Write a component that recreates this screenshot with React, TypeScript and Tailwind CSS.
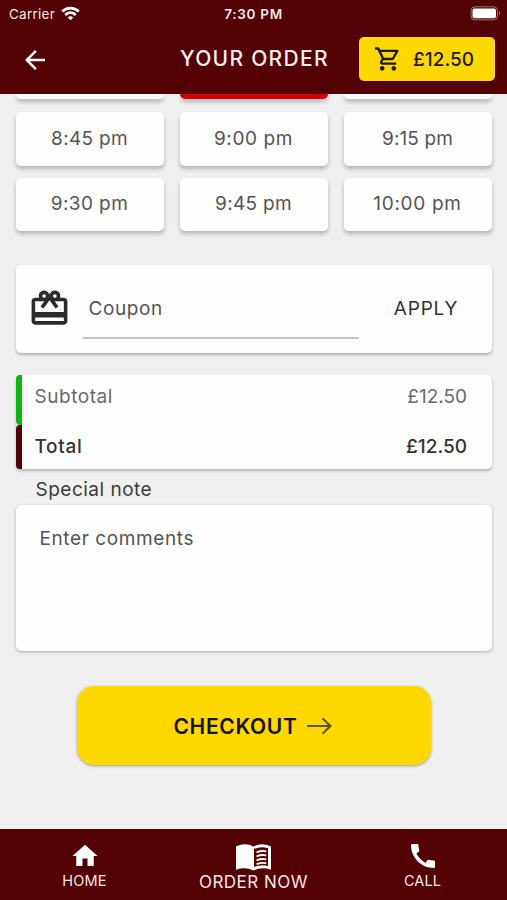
import {
  MdArrowBack,
  MdCall,
  MdHome,
  MdOutlineShoppingCart,
  MdRedeem,
} from "react-icons/md";

const slots = [
  { time: "8:45 pm", style: "tracking-[0.3px]" },
  { time: "9:00 pm", style: "tracking-[0.6px]" },
  { time: "9:15 pm", style: "tracking-[0.1px]" },
  { time: "9:30 pm", style: "tracking-[0.4px]" },
  { time: "9:45 pm", style: "tracking-[0.3px]" },
  { time: "10:00 pm", style: "tracking-[0.7px]" },
];

function StatusBar() {
  return (
    <div className="flex h-7 items-center justify-between pr-[6px] pl-[9px] text-[13.5px] text-[#f6e9e6]">
      <div className="flex w-24 items-center gap-[6px]">
        <span className="tracking-[0.25px]">Carrier</span>
        <svg className="mt-[-2px]" width="19" height="15" viewBox="0 0 19 15" fill="none" stroke="#fff" strokeWidth="2.8">
          <path d="M1.2 5.6a11.8 11.8 0 0 1 16.6 0" />
          <path d="M4.2 8.9a7.5 7.5 0 0 1 10.6 0" />
          <path d="M9.5 14.2l-2.7-2.7a3.8 3.8 0 0 1 5.4 0z" fill="#fff" stroke="none" />
        </svg>
      </div>
      <span className="mr-[3px] font-semibold tracking-[0.7px]">7:30 PM</span>
      <div className="flex w-24 justify-end">
        <svg className="mt-[-2px]" width="31" height="15" viewBox="0 0 31 15">
          <rect x="1" y="0.8" width="26.5" height="13" rx="4" fill="none" stroke="#fff" strokeOpacity="0.45" />
          <rect x="2.5" y="2.4" width="23.5" height="9.8" rx="2" fill="#fff" />
          <path d="M29 5.2q2 2 0 4.2z" fill="#fff" fillOpacity="0.5" />
        </svg>
      </div>
    </div>
  );
}

function Header() {
  return (
    <header className="h-[94px] shrink-0 bg-[#520003]">
      <StatusBar />
      <div className="grid h-[62px] grid-cols-[180px_148px_1fr] items-center pr-3">
        <button className="pt-px pl-[20px] text-white" aria-label="Back">
          <MdArrowBack size={30} />
        </button>
        <h1 className="text-[21px] font-medium tracking-[1.3px] whitespace-nowrap text-[#fbeeea]">
          YOUR ORDER
        </h1>
        <button className="ml-[31px] flex h-[44px] items-center rounded-[5px] bg-[#ffd800] pl-[15px] text-[#1c1800]">
          <MdOutlineShoppingCart size={28} />
          <span className="mt-[2px] ml-[11px] text-[19px] font-medium">£12.50</span>
        </button>
      </div>
    </header>
  );
}

function TimeSlots() {
  return (
    <div>
      {/* Bottom edge of the row scrolled under the header */}
      <div className="grid h-[18px] grid-cols-3 gap-4">
        <div className="h-[5px] rounded-b-[5px] bg-[#fdfdfd] shadow-[0_3px_4px_rgba(0,0,0,0.25)]" />
        <div className="h-[5px] rounded-b-[5px] bg-[#d20000] shadow-[0_3px_4px_rgba(0,0,0,0.25)]" />
        <div className="h-[5px] rounded-b-[5px] bg-[#fdfdfd] shadow-[0_3px_4px_rgba(0,0,0,0.25)]" />
      </div>
      <div className="grid grid-cols-3 gap-x-4 gap-y-3">
        {slots.map((slot) => (
          <button
            key={slot.time}
            className={`h-[53.5px] rounded-[5px] bg-[#fdfdfd] text-[19px] text-[#555] shadow-[0_3px_4px_rgba(0,0,0,0.25)] ${slot.style}`}
          >
            {slot.time}
          </button>
        ))}
      </div>
    </div>
  );
}

function Coupon() {
  return (
    <div className="mt-[34px] flex h-[88px] rounded-[5px] bg-[#fdfdfd] pl-3 shadow-[0_2px_3px_rgba(0,0,0,0.25)]">
      <MdRedeem size={43} className="mt-[22px] shrink-0 text-[#2b2b2b]" />
      <div className="ml-3 flex h-[74px] w-[276px] items-center border-b-2 border-[#c4c4c4] pt-[16px] pl-[6px] text-[19px] tracking-[0.6px] text-[#555]">
        Coupon
      </div>
      <button className="flex-1 pl-[2px] text-[19px] tracking-[0.8px] text-[#333]">
        APPLY
      </button>
    </div>
  );
}

function Totals() {
  return (
    <div className="mt-[22px] rounded-[5px] bg-[#fdfdfd] text-[19px] shadow-[0_2px_3px_rgba(0,0,0,0.25)]">
      <div className="flex h-[50px] justify-between rounded-l-[4px] border-l-[6px] border-[#0cb80c] pt-[8px] pr-[24.5px] pl-[13px] text-[#6a6a6a]">
        <span className="tracking-[0.55px]">Subtotal</span>
        <span>£12.50</span>
      </div>
      <div className="flex h-[44px] justify-between rounded-l-[4px] border-l-[6px] border-[#520003] pt-[8px] pr-[24.5px] pl-[13px] font-medium text-[#333]">
        <span className="tracking-[0.7px]">Total</span>
        <span>£12.50</span>
      </div>
    </div>
  );
}

function Checkout() {
  return (
    <button className="mt-[35px] ml-[61px] flex h-[79px] w-[354px] items-center rounded-[17px] bg-[#ffd800] pl-[97px] text-[#141200] shadow-[0_1px_3px_rgba(0,0,0,0.35)]">
      <span className="mt-[2px] w-[123px] text-left text-[21px] font-semibold tracking-[0.65px]">
        CHECKOUT
      </span>
      <svg className="ml-[10px]" width="25" height="18" viewBox="0 0 25 18" fill="none" stroke="#5d541d" strokeWidth="2">
        <path d="M0 9h23.5M15.5 1.2L23.5 9l-8 7.8" />
      </svg>
    </button>
  );
}

// Open menu, left page solid and right page ruled
function MenuIcon() {
  return (
    <svg width="35" height="27" viewBox="0 0 35 27">
      <path
        fill="#fff"
        d="M0 2.5Q9-2 17.5 2.5Q26-2 35 2.5V25.8Q26 22.5 17.5 26.5Q9 22.5 0 25.8Z"
      />
      <path fill="#520003" d="M18 5Q25 1.8 32 4.2V22Q25 20.2 18 22.8Z" />
      <path
        fill="none"
        stroke="#fff"
        strokeWidth="1.9"
        d="M20.5 8.4Q25.5 6.4 30.3 7.4M20.5 12.4Q25.5 10.4 30.3 11.4M20.5 16.4Q25.5 14.4 30.3 15.4M20.5 20.2Q25.5 18.2 30.3 19.2"
      />
    </svg>
  );
}

function BottomNav() {
  return (
    <nav className="grid h-[71px] shrink-0 grid-cols-[169px_169px_1fr] bg-[#520003] text-white">
      <div className="flex flex-col items-center pt-[12px]">
        <MdHome size={30} />
        <span className="text-[14.5px] leading-5 tracking-[0.2px] text-[#f8e6e2]">HOME</span>
      </div>
      <div className="flex flex-col items-center pt-[15px]">
        <MenuIcon />
        <span className="mt-px text-[17px] leading-5 tracking-[0.5px] text-[#f8e6e2]">ORDER NOW</span>
      </div>
      <div className="flex flex-col items-center pt-[11px]">
        <MdCall size={32} />
        <span className="mt-[-1px] text-[14.5px] leading-5 tracking-[0.1px] text-[#f8e6e2]">CALL</span>
      </div>
    </nav>
  );
}

export default function App() {
  return (
    <div className="flex h-[900px] w-[507px] flex-col overflow-hidden bg-[#f0f0f0] font-['Inter',sans-serif]">
      <Header />
      <main className="flex-1 px-[15.5px]">
        <TimeSlots />
        <Coupon />
        <Totals />
        <p className="pt-[7px] pl-5 text-[19px] leading-7 tracking-[0.5px] text-[#3c3c3c]">
          Special note
        </p>
        <div className="mt-[1px] h-[146px] rounded-[5px] bg-[#fdfdfd] pt-[20px] pl-6 text-[19px] tracking-[0.6px] text-[#555] shadow-[0_1px_3px_rgba(0,0,0,0.3)]">
          Enter comments
        </div>
        <Checkout />
      </main>
      <BottomNav />
    </div>
  );
}
